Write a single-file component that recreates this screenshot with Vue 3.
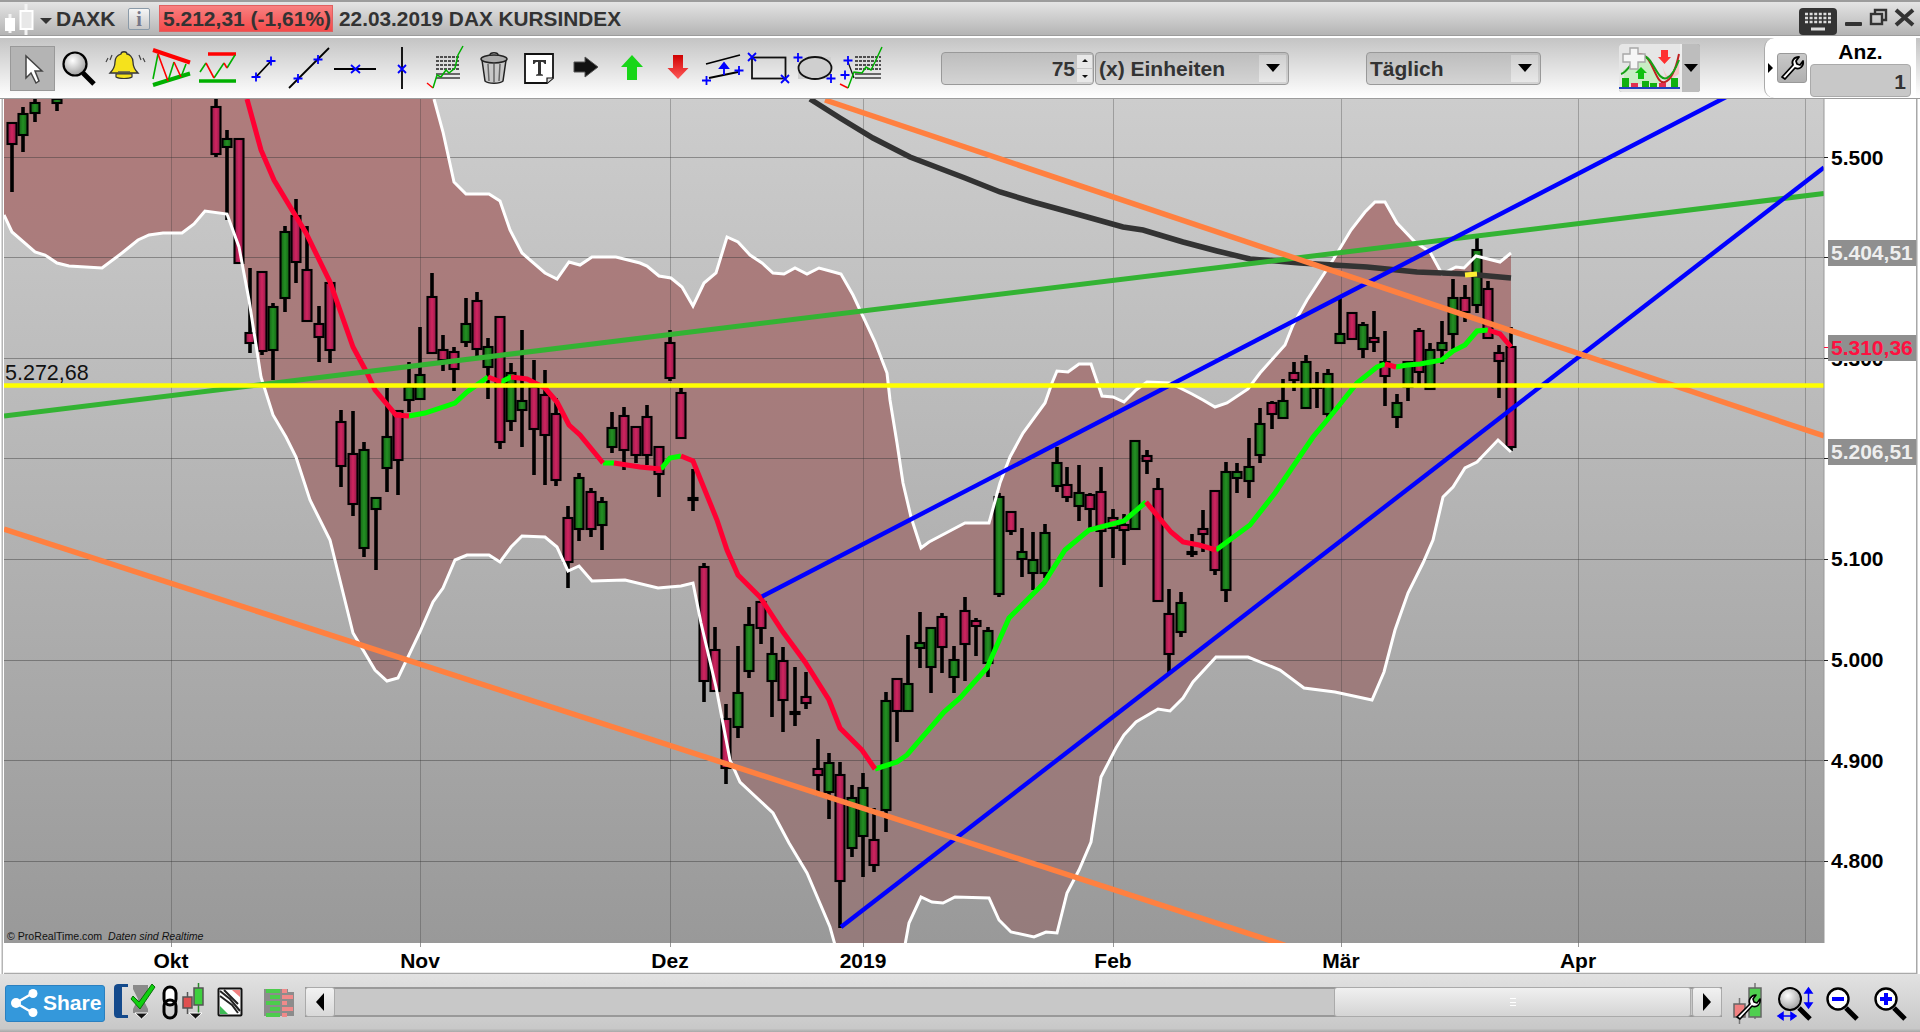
<script setup>
// candles: x, wick top, wick bottom, body top, body bottom, colour
const candles = [
  [12, 122, 192, 123, 144, "r"], [23, 107, 152, 114, 135, "g"], [35, 98, 122, 103, 113, "g"], [57, 98, 111, 99, 103, "g"],
  [216, 98, 157, 107, 154, "r"], [227, 130, 220, 139, 147, "g"], [239, 139, 263, 139, 263, "r"], [250, 268, 353, 333, 343, "r"],
  [262, 272, 355, 272, 351, "r"], [273, 303, 380, 307, 350, "g"], [285, 226, 312, 232, 298, "g"], [296, 199, 283, 216, 262, "r"],
  [307, 226, 322, 270, 321, "r"], [319, 306, 362, 324, 337, "r"], [330, 283, 363, 283, 350, "r"], [341, 410, 487, 422, 466, "r"],
  [353, 411, 516, 454, 504, "r"], [364, 442, 557, 450, 548, "g"], [376, 497, 570, 498, 509, "g"], [387, 388, 492, 437, 468, "g"],
  [398, 410, 495, 411, 460, "r"], [409, 362, 412, 387, 400, "g"], [420, 327, 399, 375, 399, "g"], [432, 273, 353, 297, 353, "r"],
  [443, 335, 371, 350, 360, "r"], [454, 347, 391, 352, 369, "r"], [466, 298, 347, 324, 342, "g"], [477, 292, 356, 301, 349, "r"],
  [488, 338, 399, 347, 367, "g"], [500, 316, 449, 317, 442, "r"], [511, 363, 431, 373, 421, "g"], [522, 330, 447, 401, 410, "g"],
  [534, 360, 475, 387, 429, "r"], [545, 370, 485, 395, 435, "r"], [556, 398, 486, 414, 480, "r"], [568, 506, 588, 518, 562, "r"],
  [579, 473, 541, 478, 529, "g"], [591, 488, 537, 492, 529, "r"], [602, 497, 550, 502, 525, "g"], [612, 412, 453, 428, 447, "g"],
  [624, 407, 470, 416, 450, "r"], [636, 427, 463, 427, 455, "r"], [647, 405, 465, 417, 455, "r"], [659, 447, 497, 447, 474, "r"],
  [670, 330, 381, 343, 378, "r"], [681, 388, 438, 393, 438, "r"], [693, 469, 511, 498, 500, "d"], [704, 563, 702, 567, 681, "r"],
  [715, 627, 691, 650, 691, "r"], [726, 704, 784, 719, 768, "r"], [738, 646, 738, 693, 727, "g"], [749, 607, 678, 625, 671, "g"],
  [761, 602, 644, 602, 628, "r"], [772, 637, 717, 654, 681, "g"], [783, 647, 732, 661, 700, "r"], [795, 667, 726, 712, 714, "d"],
  [806, 672, 709, 697, 703, "r"], [818, 739, 796, 769, 775, "r"], [829, 753, 819, 763, 792, "g"], [840, 762, 928, 775, 881, "r"],
  [852, 785, 857, 798, 848, "g"], [863, 773, 877, 788, 836, "g"], [874, 808, 872, 840, 865, "r"], [886, 692, 832, 701, 810, "g"],
  [897, 679, 742, 679, 711, "r"], [908, 635, 712, 684, 711, "g"], [920, 612, 668, 643, 648, "g"], [931, 627, 693, 628, 667, "g"],
  [942, 613, 673, 617, 647, "r"], [954, 646, 693, 660, 677, "g"], [965, 597, 681, 611, 644, "r"], [976, 618, 656, 621, 626, "r"],
  [988, 627, 677, 631, 663, "g"], [999, 493, 597, 497, 594, "g"], [1011, 511, 535, 512, 531, "r"], [1022, 528, 577, 552, 559, "g"],
  [1033, 532, 590, 560, 573, "g"], [1045, 524, 578, 533, 573, "g"], [1057, 447, 492, 463, 486, "g"], [1067, 467, 502, 485, 497, "r"],
  [1079, 465, 521, 493, 506, "g"], [1090, 493, 528, 495, 509, "r"], [1101, 467, 587, 492, 531, "r"], [1113, 509, 558, 518, 528, "r"],
  [1124, 514, 565, 525, 530, "r"], [1135, 440, 529, 441, 529, "g"], [1147, 450, 474, 456, 461, "r"], [1158, 478, 601, 489, 601, "r"],
  [1169, 589, 673, 614, 654, "r"], [1181, 592, 637, 603, 632, "g"], [1192, 534, 557, 552, 554, "d"], [1203, 510, 552, 529, 534, "r"],
  [1215, 491, 575, 491, 570, "r"], [1226, 462, 602, 472, 590, "g"], [1237, 463, 493, 472, 478, "g"], [1249, 438, 498, 467, 481, "g"],
  [1260, 408, 463, 424, 455, "g"], [1272, 401, 429, 403, 414, "r"], [1283, 379, 418, 401, 418, "g"], [1294, 362, 391, 373, 380, "r"],
  [1306, 355, 408, 362, 408, "g"], [1317, 372, 408, 386, 388, "d"], [1328, 369, 418, 374, 414, "g"], [1340, 297, 343, 334, 343, "g"],
  [1352, 313, 339, 313, 339, "r"], [1363, 322, 358, 325, 349, "g"], [1374, 311, 352, 338, 342, "r"], [1385, 331, 406, 362, 376, "r"],
  [1397, 394, 428, 403, 417, "g"], [1408, 361, 401, 362, 387, "g"], [1419, 328, 386, 331, 372, "r"], [1430, 343, 390, 350, 389, "g"],
  [1442, 321, 364, 343, 350, "g"], [1453, 279, 349, 298, 334, "g"], [1465, 285, 322, 298, 312, "r"], [1477, 234, 313, 250, 305, "g"],
  [1488, 281, 338, 289, 338, "r"], [1499, 345, 398, 353, 361, "r"], [1511, 327, 451, 347, 447, "r"],
];

const upperBand = "434,99 443,132 454,182 466,194 489,194 500,201 510,230 522,253 545,273 557,279 569,262 580,265 592,257 616,257 640,263 647,266 659,276 671,278 682,287 693,306 704,283 716,273 727,237 738,242 750,255 762,263 773,273 784,274 795,268 807,274 819,268 830,271 841,274 853,295 875,342 887,373 890,400 897,443 903,483 911,517 921,548 929,542 965,523 989,523 1000,483 1010,457 1023,433 1045,403 1052,383 1057,371 1068,372 1079,364 1091,364 1102,396 1113,397 1124,402 1136,390 1147,382 1170,383 1192,394 1203,400 1215,407 1227,403 1248,389 1260,373 1285,345 1293,325 1307,300 1333,260 1351,230 1365,212 1375,202 1385,202 1397,223 1415,242 1430,252 1442,274 1456,267 1464,268 1476,256 1500,262 1511,253";
const lowerBand = "4,215 12,232 35,252 45,255 57,263 69,266 102,268 122,253 138,240 149,235 163,233 182,233 194,224 205,211 227,214 239,247 249,300 261,377 273,415 286,437 296,457 310,500 330,540 353,633 375,670 387,681 398,678 420,632 433,602 443,588 455,560 467,555 489,555 500,562 511,547 522,536 545,537 557,547 568,571 579,566 592,581 625,580 658,588 681,586 693,583 701,623 716,687 730,760 740,782 773,813 789,843 807,873 830,927 835,945 870,970 905,945 909,923 921,897 932,902 943,903 955,897 989,898 999,920 1011,932 1034,937 1046,932 1057,933 1067,893 1079,870 1091,842 1101,777 1116,748 1124,735 1136,722 1158,709 1170,711 1183,698 1193,682 1216,657 1248,657 1280,670 1304,688 1335,692 1372,700 1384,672 1395,630 1408,593 1423,563 1433,540 1443,497 1453,487 1465,468 1477,462 1498,440 1511,452";
const bandFill = `4,99 ${upperBand} ${lowerBand.split(" ").reverse().join(" ")}`;
const ma200 = "810,99 840,118 873,138 910,157 965,178 1000,192 1033,202 1073,213 1123,227 1143,230 1183,242 1217,251 1250,259 1300,263 1367,267 1417,272 1467,274 1511,278";

const maRed = [
  "247,99 261,150 274,180 286,200 306,233 330,282 353,347 367,373 375,390 396,415 409,416",
  "488,377 501,382",
  "511,377 527,379 545,388 557,402 569,425 580,435 603,463",
  "614,463 640,467 650,468 661,469",
  "681,456 693,461 717,520 727,550 738,575 760,597 783,632 805,662 829,700 840,728 862,750 875,769",
  "1146,502 1171,532 1183,542 1199,545 1216,550",
  "1385,364 1396,367",
  "1488,330 1500,334 1511,347",
];
const maGreen = [
  "409,416 425,413 455,403 467,392 488,377",
  "501,382 511,377",
  "603,463 614,463",
  "661,469 670,458 681,456",
  "875,769 897,762 907,755 944,712 960,698 987,668 1009,618 1044,583 1065,550 1089,530 1124,521 1146,502",
  "1216,550 1250,525 1275,493 1313,437 1333,413 1357,383 1377,367 1385,364",
  "1396,367 1407,365 1420,364 1442,360 1453,351 1465,345 1477,331 1488,330",
];

const gridY = [157.5, 257.5, 358.5, 458.5, 559.5, 660.5, 760.5, 861.5];
const gridX = [171.5, 420.5, 670.5, 863.5, 1113.5, 1341.5, 1578.5, 1805.5];
const yLabels = [
  ["5.500", 165], ["5.300", 366], ["5.100", 566], ["5.000", 667], ["4.900", 768], ["4.800", 868],
];
const xLabels = [
  ["Okt", 171], ["Nov", 420], ["Dez", 670], ["2019", 863], ["Feb", 1113], ["Mär", 1341], ["Apr", 1578],
];
const priceTags = [
  { text: "5.404,51", y: 240, cls: "tag-text" },
  { text: "5.310,36", y: 335, cls: "tag-text tag-text--red" },
  { text: "5.206,51", y: 439, cls: "tag-text" },
];

const fibRows = [57, 61, 65, 69, 74, 78];
const fib2Rows = [57, 61, 65, 69, 74, 78];
</script>

<template>
  <div class="window">
    <header class="title-bar">
      <svg width="56" height="34" viewBox="0 2 56 34">
        <path d="M10 14v19M26 4v31" stroke="#f4f4f4" stroke-width="3" />
        <rect x="5" y="18" width="10" height="13" fill="#fff" />
        <rect x="20.5" y="11" width="12" height="18" fill="#e8e8e8" stroke="#fff" stroke-width="2" />
        <path d="M40 18h12l-6 6z" fill="#333" />
      </svg>
      <span class="title-bar__name">DAXK</span>
      <span class="title-bar__info">i</span>
      <span class="title-bar__price">5.212,31 (-1,61%)</span>
      <span class="title-bar__desc">22.03.2019 DAX KURSINDEX</span>
      <svg class="title-bar__controls" width="121" height="34" viewBox="1795 2 121 34">
        <rect x="1799" y="8" width="38" height="27" rx="4" fill="#333" />
        <path d="M1805 14h26M1805 18h26M1805 22h26" stroke="#ddd" stroke-width="2.4" stroke-dasharray="3 1.6" />
        <rect x="1811" y="27.500" width="14" height="3" fill="#ddd" />
        <rect x="1845" y="22" width="17" height="4" rx="1" fill="#333" />
        <path d="M1875 14v-4h11v10h-4" fill="none" stroke="#333" stroke-width="2.4" />
        <rect x="1871" y="14" width="11" height="10" fill="none" stroke="#333" stroke-width="2.4" />
        <path d="M1896 10l17 15M1913 10l-17 15" stroke="#333" stroke-width="4" />
      </svg>
    </header>

    <nav class="toolbar">
      <button class="tool-pointer">
        <svg width="45" height="45" viewBox="10 45 45 45">
          <path d="M26 55v22l5-5 5 10 3-2-4-10h7z" fill="#fff" stroke="#444" stroke-width="1.5" />
        </svg>
      </button>
      <svg width="46" height="61" viewBox="58 38 46 61">
        <defs>
          <radialGradient id="lens" cx="40%" cy="35%" r="70%">
            <stop offset="0" stop-color="#fff" />
            <stop offset="1" stop-color="#9a9a9a" />
          </radialGradient>
        </defs>
        <path d="M83 73l11 11" stroke="#000" stroke-width="5" />
        <circle cx="75" cy="64" r="11.500" fill="url(#lens)" stroke="#000" stroke-width="2.200" />
      </svg>
      <svg width="46" height="61" viewBox="104 38 46 61">
        <path d="M110 73h28c-4-4-5-7-5-11 0-5-4-8-6-8 0-3-6-3-6 0-3 1-6 3-6 8 0 4-1 7-5 11z" fill="#f5e21c" stroke="#333" stroke-width="1.300" />
        <path d="M116 74h16v3c-3 2-13 2-16 0z" fill="#f5e21c" stroke="#333" stroke-width="1.200" />
        <path d="M118 72h12" stroke="#555" stroke-width="1.500" />
        <path d="M108 58l-2 4M112 55l-2 5M139 55l2 5M143 58l2 4" stroke="#444" stroke-width="1.200" />
      </svg>
      <svg width="47" height="61" viewBox="150 38 47 61">
        <path d="M153 50l37 12.500" stroke="#ff0000" stroke-width="4" />
        <path d="M153 85l37-11.500" stroke="#00b000" stroke-width="4" />
        <path d="M153 79l5-25M168 81l6-19M181 77l5-13" stroke="#00b000" stroke-width="1.600" fill="none" />
        <path d="M158 54l10 27M174 62l7 15" stroke="#ff0000" stroke-width="1.600" fill="none" />
      </svg>
      <svg width="50" height="61" viewBox="197 38 50 61">
        <path d="M208 54h28" stroke="#ff0000" stroke-width="3.500" />
        <path d="M199 81h37" stroke="#00b000" stroke-width="3.500" />
        <path d="M200 72l6-9M214 78l10-15M227 68l8-13" stroke="#00b000" stroke-width="1.600" fill="none" />
        <path d="M206 63l8 15M224 63l3 5" stroke="#ff0000" stroke-width="1.600" fill="none" />
      </svg>
      <svg width="39" height="61" viewBox="247 38 39 61">
        <path d="M256 77l15-16" stroke="#000" stroke-width="1.800" />
        <path d="M256 72.500v9M251.500 77h9M271 56.500v9M266.500 61h9" stroke="#0000ff" stroke-width="1.800" />
      </svg>
      <svg width="46" height="61" viewBox="286 38 46 61">
        <path d="M289 88l40-40" stroke="#000" stroke-width="1.800" />
        <path d="M298 74v9M293.500 78.500h9M318 55v9M313.500 59.500h9" stroke="#0000ff" stroke-width="1.800" />
      </svg>
      <svg width="60" height="61" viewBox="332 38 60 61">
        <path d="M334 69h42" stroke="#000" stroke-width="1.800" />
        <path d="M351 65l9 8M360 65l-9 8" stroke="#0000ff" stroke-width="1.800" />
      </svg>
      <svg width="30" height="61" viewBox="392 38 30 61">
        <path d="M402 47v42" stroke="#000" stroke-width="1.800" />
        <path d="M398 65l8 8M406 65l-8 8" stroke="#0000ff" stroke-width="1.800" />
      </svg>
      <svg width="54" height="61" viewBox="422 38 54 61">
        <path v-for="y in fibRows" :key="y" :d="`M436 ${y}h24`" stroke="#222" stroke-width="1.300" :stroke-dasharray="y % 2 ? '3 1' : '0'" />
        <path d="M427 83l6 5" stroke="#ff0000" stroke-width="1.400" fill="none" />
        <path d="M433 88l4-13 4 2 5-7 3 3 6-5 3-13 5-9" stroke="#00b000" stroke-width="1.500" fill="none" />
      </svg>
      <svg width="44" height="61" viewBox="476 38 44 61">
        <path d="M482 60l3 21c3 3 15 3 18 0l3-21z" fill="#c8c8c8" stroke="#222" stroke-width="1.500" />
        <ellipse cx="494" cy="59" rx="13" ry="4" fill="#aaa" stroke="#222" stroke-width="1.500" />
        <path d="M490 55c0-3 8-3 8 0" fill="none" stroke="#222" stroke-width="1.500" />
        <path d="M488 64l1 17M494 64v18M500 64l-1 17" stroke="#666" stroke-width="1.500" />
      </svg>
      <svg width="50" height="61" viewBox="520 38 50 61">
        <path d="M525 54h28v24l-6 5h-22z" fill="#fff" stroke="#111" stroke-width="1.800" />
        <path d="M547 83v-5h6" fill="#ddd" stroke="#111" stroke-width="1.200" />
        <path d="M533 60h13v4h-1.500c-.5-1.500-1-2-3.500-2v12l2 .8v1h-7v-1l2-.8v-12c-2.500 0-3 .5-3.500 2H533z" fill="#333" />
      </svg>
      <svg width="46" height="61" viewBox="570 38 46 61">
        <path d="M574 62h11v-5l13 10-13 10v-5h-11z" fill="#111" stroke="#555" stroke-width="1" />
      </svg>
      <svg width="48" height="61" viewBox="616 38 48 61">
        <path d="M632 55l11 12h-6v13h-10v-13h-6z" fill="#19d619" />
      </svg>
      <svg width="36" height="61" viewBox="664 38 36 61">
        <defs>
          <linearGradient id="redArrow" x1="0" x2="0" y1="0" y2="1">
            <stop offset="0" stop-color="#d00000" />
            <stop offset="1" stop-color="#ff5a5a" />
          </linearGradient>
        </defs>
        <path d="M673 55h10v13h5.500l-10.500 11-10.500-11h5.500z" fill="url(#redArrow)" />
      </svg>
      <svg width="45" height="61" viewBox="700 38 45 61">
        <path d="M706 64l34-9M709 78l29-6" stroke="#000" stroke-width="1.800" />
        <path d="M724 75v-8M720 68l4-5 4 5z" stroke="#0000ff" stroke-width="1.800" fill="#0000ff" />
        <path d="M706.500 76v9M702 80.500h9M739 66v9M734.500 70.500h9" stroke="#0000ff" stroke-width="1.800" />
      </svg>
      <svg width="47" height="61" viewBox="745 38 47 61">
        <rect x="752" y="57.500" width="33.500" height="21" fill="none" stroke="#111" stroke-width="1.800" />
        <path d="M748 53l8 8M756 53l-8 8M781 75l8 8M789 75l-8 8" stroke="#0000ff" stroke-width="1.800" />
      </svg>
      <svg width="46" height="61" viewBox="792 38 46 61">
        <rect x="798" y="57" width="33" height="22" fill="#cfcfcf" />
        <ellipse cx="815" cy="68" rx="16.500" ry="11" fill="none" stroke="#111" stroke-width="1.800" />
        <path d="M798 53v9M793.500 57.500h9M831 74v9M826.500 78.500h9" stroke="#0000ff" stroke-width="1.800" />
      </svg>
      <svg width="46" height="61" viewBox="838 38 46 61">
        <path v-for="y in fib2Rows" :key="y" :d="`M855 ${y}h26`" stroke="#222" stroke-width="1.300" :stroke-dasharray="y % 2 ? '3 1' : '0'" />
        <path d="M848 62l6 16" stroke="#111" stroke-width="1.300" fill="none" />
        <path d="M840 84l8 4" stroke="#ff0000" stroke-width="1.400" fill="none" />
        <path d="M848 88l6-16 8 1 4-6 5 3 4-8 7-15" stroke="#00b000" stroke-width="1.500" fill="none" />
        <path d="M848 56v9M843.500 60.500h9M845 70.500v9M840.500 75h9" stroke="#0000ff" stroke-width="1.800" />
      </svg>

      <div class="field field--number">
        75
        <span class="spinner"><i class="spinner__up"></i><i class="spinner__down"></i></span>
      </div>
      <div class="field field--units">(x) Einheiten<span class="drop"><i></i></span></div>
      <div class="field field--period">Täglich<span class="drop"><i></i></span></div>

      <div class="indicator">
        <svg width="61" height="48" viewBox="1620 44 61 48">
          <rect x="1620" y="44" width="61" height="48" fill="#e6e6e6" />
          <path d="M1662 62c4 14 8 18 12 10 3-5 5-12 6-18v20l-12 8z" fill="#f6c4c4" />
          <path d="M1624 70c8-4 12-14 20-14 10 0 12 20 20 20l-4 8h-34z" fill="#c9edc4" />
          <path d="M1632 58c10-8 16-2 20 6 6 12 8 20 14 18s11-14 14-28" fill="none" stroke="#c02020" stroke-width="2" />
          <path d="M1622 74c8-2 12-18 22-18 10 0 14 26 24 22 6-3 9-10 12-18" fill="none" stroke="#16a016" stroke-width="2" />
          <path d="M1631 48h8v6h7v8h-7v7h-8v-7h-7v-8h7z" fill="#f6f6f6" stroke="#a8a8a8" stroke-width="1.400" />
          <path d="M1662 50h7v7h3l-6.500 7-6.500-7h3z" fill="#ff3030" />
          <path d="M1642 67l6 6h-3v6h-6v-6h-3z" fill="#10c010" />
          <path d="M1623 78h7v9h-7zM1643 81h7v6h-7zM1651 83h7v4h-7zM1672 78h7v9h-7z" fill="#10b010" />
          <path d="M1632 83h7v4h-7zM1660 83h7v4h-7z" fill="#e03050" />
          <path d="M1620 88h61" stroke="#2040c0" stroke-width="2" />
        </svg>
        <span class="indicator__drop"><i></i></span>
      </div>

      <div class="tool-panel">
        <i class="tool-panel__arrow"></i>
        <button class="wrench-btn">
          <svg width="26" height="26" viewBox="0 0 26 26">
            <path d="M3 22l11-12c-2-4 1-8 6-8l-3 4 1 3 3 1 3-4c1 5-3 9-8 7L6 24z" fill="#fff" stroke="#000" stroke-width="1.800" stroke-linejoin="round" />
          </svg>
        </button>
        <div class="count">
          <span class="count__label">Anz.</span>
          <span class="count__value">1</span>
        </div>
      </div>
    </nav>

    <svg class="chart" width="1920" height="875" viewBox="0 99 1920 875">
      <defs>
        <linearGradient id="plotBg" gradientUnits="userSpaceOnUse" x1="0" x2="0" y1="99" y2="943">
          <stop offset="0" stop-color="#cdcdcd" />
          <stop offset="1" stop-color="#999999" />
        </linearGradient>
        <linearGradient id="bandBg" gradientUnits="userSpaceOnUse" x1="0" x2="0" y1="99" y2="943">
          <stop offset="0" stop-color="#af7c7c" />
          <stop offset="1" stop-color="#957c7c" />
        </linearGradient>
        <linearGradient id="bodyRed" x1="0" x2="1" y1="0" y2="0">
          <stop offset="0" stop-color="#8c1a48" />
          <stop offset=".5" stop-color="#d0245f" />
          <stop offset="1" stop-color="#8c1a48" />
        </linearGradient>
        <linearGradient id="bodyGreen" x1="0" x2="1" y1="0" y2="0">
          <stop offset="0" stop-color="#145f14" />
          <stop offset=".5" stop-color="#239023" />
          <stop offset="1" stop-color="#145f14" />
        </linearGradient>
        <clipPath id="plotClip">
          <rect x="4" y="99" width="1820" height="844" />
        </clipPath>
      </defs>

      <rect x="0" y="99" width="1920" height="875" fill="#fff" />
      <rect x="1.500" y="99" width="1.500" height="875" fill="#b5b5b5" />
      <rect x="1916" y="99" width="1.500" height="875" fill="#a8a8a8" />
      <rect x="4" y="99" width="1820" height="844" fill="url(#plotBg)" />

      <g clip-path="url(#plotClip)">
        <polygon :points="bandFill" fill="url(#bandBg)" />
        <path v-for="y in gridY" :key="y" :d="`M4 ${y}H1824`" class="grid" />
        <path v-for="x in gridX" :key="x" :d="`M${x} 99V943`" class="grid grid--v" />

        <g v-for="c in candles" :key="c[0]">
          <path :d="`M${c[0]} ${c[1]}V${c[2]}`" stroke="#000" stroke-width="3.600" />
          <rect
            :x="c[0] - 4.500"
            :y="c[3]"
            width="9"
            :height="c[4] - c[3]"
            :fill="c[5] === 'r' ? 'url(#bodyRed)' : c[5] === 'g' ? 'url(#bodyGreen)' : '#000'"
            stroke="#000"
            stroke-width="2.100"
          />
        </g>

        <polyline :points="upperBand" class="band-line" />
        <polyline :points="lowerBand" class="band-line" />
        <polyline :points="ma200" class="ma-black" />
        <path d="M1465 275l12-1" stroke="#ffee33" stroke-width="5" />
        <polyline v-for="p in maGreen" :key="p" :points="p" class="ma ma--green" />
        <polyline v-for="p in maRed" :key="p" :points="p" class="ma ma--red" />

        <path d="M4 416L1824 193.500" class="trend trend--green" />
        <path d="M762 596.500L1730 95" class="trend trend--blue" />
        <path d="M841 927L1824 167.500" class="trend trend--blue" />
        <path d="M4 529L1290 947" class="trend trend--orange" />
        <path d="M825 100L1824 436" class="trend trend--orange" />
        <path d="M4 385.500H1824" class="trend trend--yellow" />

        <text x="5" y="380" class="level-text">5.272,68</text>
        <text x="7" y="940" class="copy-text">© ProRealTime.com <tspan dx="3" font-style="italic">Daten sind Realtime</tspan></text>
      </g>

      <path v-for="x in gridX.slice(0, 7)" :key="'t' + x" :d="`M${x} 943V947`" stroke="#999" />
      <path d="M1824 99V943" stroke="#999" />
      <path d="M4 973.500H1916" stroke="#aaa" stroke-width="1.500" />
      <path v-for="y in gridY" :key="'a' + y" :d="`M1824 ${y}H1828`" stroke="#222" />

      <text v-for="l in yLabels" :key="l[0]" x="1831" :y="l[1]" class="axis-text">{{ l[0] }}</text>
      <g v-for="t in priceTags" :key="t.text">
        <rect x="1828" :y="t.y" width="88" height="26" fill="#8f8f8f" />
        <text x="1831" :y="t.y + 20" :class="t.cls">{{ t.text }}</text>
      </g>
      <path d="M1824 347.500H1828" stroke="#ff1040" />
      <text v-for="l in xLabels" :key="l[0]" :x="l[1]" y="968" text-anchor="middle" class="axis-text">{{ l[0] }}</text>
    </svg>

    <footer class="bottom-bar">
      <button class="share">
        <svg width="30" height="30" viewBox="0 0 30 30">
          <path d="M7 15L24 5M7 15l17 10" stroke="#fff" stroke-width="2.500" />
          <circle cx="7" cy="15" r="5" fill="#fff" />
          <circle cx="24" cy="5.500" r="4.500" fill="#fff" />
          <circle cx="24" cy="24.500" r="4.500" fill="#fff" />
        </svg>
        Share
      </button>
      <svg width="50" height="58" viewBox="110 974 50 58">
        <path d="M128 984h-10c-2 0-4 1-4 4v26c0 3 2 4 4 4h10v-3h-6v-28h6z" fill="#144a8c" />
        <path d="M133 985h15v4l-5 10 5 10v4h-15v-4l5-10-5-10z" fill="#8a8a8a" />
        <path d="M133 996l6 6 13-18 3 3-15 22-9-10z" fill="#10d010" stroke="#087008" stroke-width="1" />
        <path d="M135 1013h13l-6.500 6z" fill="#111" stroke="#fff" stroke-width="1" />
      </svg>
      <svg width="52" height="58" viewBox="160 974 52 58">
        <rect x="164" y="987" width="12" height="18" rx="6" fill="#fff" stroke="#000" stroke-width="3" />
        <rect x="164" y="1000" width="12" height="18" rx="6" fill="none" stroke="#000" stroke-width="3" />
        <path d="M187.500 992v22" stroke="#555" stroke-width="1.500" />
        <rect x="183" y="997" width="9" height="11" fill="#e05050" stroke="#555" stroke-width="1.500" />
        <path d="M198.500 983v30" stroke="#2a8a2a" stroke-width="1.500" />
        <rect x="194" y="988" width="9" height="17" fill="#3dd03d" stroke="#555" stroke-width="1.500" />
        <path d="M189 1013h13l-6.500 6z" fill="#111" stroke="#fff" stroke-width="1" />
      </svg>
      <svg width="46" height="58" viewBox="212 974 46 58">
        <rect x="218.500" y="988.500" width="23" height="27" rx="1" fill="#fff" stroke="#111" stroke-width="2" />
        <path d="M220 991l10 8 10 12M220 996l12 9 6 8M224 990l14 14" stroke="#222" stroke-width="2" fill="none" />
        <path d="M232 990h8v7z" fill="#f08080" />
        <path d="M220 1014v-8l8 8z" fill="#3dbb55" />
      </svg>
      <svg width="47" height="58" viewBox="258 974 47 58">
        <path d="M264 989h24v3h6v24h-30z" fill="#8c8c8c" />
        <g fill="#4ccc4c">
          <rect x="266" y="989" width="14" height="4" /><rect x="270" y="995" width="10" height="4" />
          <rect x="266" y="1001" width="14" height="4" /><rect x="270" y="1007" width="10" height="4" />
          <rect x="266" y="1013" width="14" height="4" />
        </g>
        <g fill="#f08a8a">
          <rect x="282" y="989" width="5" height="4" /><rect x="282" y="995" width="11" height="4" />
          <rect x="282" y="1001" width="5" height="4" /><rect x="282" y="1007" width="11" height="4" />
          <rect x="282" y="1013" width="5" height="4" />
        </g>
      </svg>

      <div class="scroll">
        <span class="scroll__btn"><i class="scroll__left"></i></span>
        <div class="scroll__track">
          <div class="scroll__thumb"><i></i></div>
        </div>
        <span class="scroll__btn"><i class="scroll__right"></i></span>
      </div>

      <svg class="bottom-bar__tools" width="188" height="58" viewBox="1728 974 188 58">
        <path d="M1739.500 998v26M1755 983v36" stroke="#777" stroke-width="1.500" />
        <rect x="1734" y="1004" width="11" height="13" fill="#f08080" stroke="#666" stroke-width="1.500" />
        <rect x="1749" y="988" width="12" height="29" fill="#4fcf4f" stroke="#666" stroke-width="1.500" />
        <path d="M1737 1017l13-13c-2-4 1-9 6-9l-3 4 1 3 3 1 3-4c1 5-3 9-8 7l-12 13z" fill="#fff" stroke="#000" stroke-width="1.600" stroke-linejoin="round" />

        <path d="M1799 1008l11 11" stroke="#000" stroke-width="5" />
        <circle cx="1790" cy="999" r="11" fill="url(#lens)" stroke="#000" stroke-width="2" />
        <path d="M1808.500 991v14M1805 993l3.500-5 3.500 5zM1805 1003l3.500 5 3.500-5zM1781 1016h12M1783 1012.500l-5 3.500 5 3.500zM1791 1012.500l5 3.500-5 3.500z" stroke="#0000ff" stroke-width="1.500" fill="#0000ff" />

        <path d="M1846 1008l11 11" stroke="#000" stroke-width="5" />
        <circle cx="1838" cy="999" r="10.500" fill="#fff" stroke="#000" stroke-width="2.400" />
        <path d="M1832 999h12" stroke="#0000ff" stroke-width="4" />

        <path d="M1894 1008l11 11" stroke="#000" stroke-width="5" />
        <circle cx="1886" cy="999" r="10.500" fill="#fff" stroke="#000" stroke-width="2.400" />
        <path d="M1880 999h12M1886 993v12" stroke="#0000ff" stroke-width="4" />
      </svg>
    </footer>
  </div>
</template>

<style scoped>
.window {
  width: 1920px;
  height: 1032px;
  overflow: hidden;
  display: flex;
  flex-direction: column;
  font-family: "Liberation Sans", Arial, sans-serif;
  color: #333;
  background: #fff;
}

.title-bar {
  height: 36px;
  box-sizing: border-box;
  flex: none;
  display: flex;
  align-items: center;
  border-top: 2px solid #9c9c9c;
  border-bottom: 1px solid #9c9c9c;
  background: linear-gradient(#e4e4e4, #b4b4b4);
  font-size: 21px;
  font-weight: bold;
  white-space: nowrap;
}

.title-bar__name {
  width: 72px;
}

.title-bar__info {
  width: 22px;
  height: 22px;
  box-sizing: border-box;
  border: 1px solid #8a9aa8;
  border-radius: 2px;
  background: linear-gradient(#f6f6f6, #c8c8c8);
  font-family: "Liberation Serif", serif;
  font-size: 20px;
  line-height: 20px;
  text-align: center;
  color: #778;
}

.title-bar__price {
  margin-left: 9px;
  width: 174px;
  height: 27px;
  box-sizing: border-box;
  padding-left: 3px;
  background: linear-gradient(#f88080, #f44a4a);
  border: 1px solid #e06060;
  line-height: 25px;
}

.title-bar__desc {
  margin-left: 6px;
  font-size: 20.8px;
}

.title-bar__controls {
  margin-left: auto;
  margin-right: 4px;
}

.toolbar {
  height: 62px;
  margin-top: 1px;
  box-sizing: border-box;
  flex: none;
  display: flex;
  align-items: center;
  padding-left: 10px;
  border-top: 1px solid #fff;
  border-bottom: 1px solid #9c9c9c;
  background: linear-gradient(#c4c4c4, #ffffff);
}

.tool-pointer {
  width: 45px;
  height: 45px;
  margin-right: 3px;
  padding: 0;
  box-sizing: border-box;
  background: #b4b4b4;
  border: 1px solid #999;
  display: flex;
}

.tool-pointer svg {
  margin: -1px;
}

.field {
  height: 33px;
  box-sizing: border-box;
  position: relative;
  display: flex;
  align-items: center;
  border: 1px solid #999;
  border-radius: 4px;
  background: linear-gradient(#bdbdbd, #d4d4d4);
  font-size: 21px;
  font-weight: bold;
  line-height: 1;
}

.field--number {
  width: 153px;
  margin-left: 57px;
  justify-content: flex-end;
  padding-right: 18px;
}

.field--units {
  width: 194px;
  margin-left: 1px;
  padding-left: 3px;
}

.field--period {
  width: 175px;
  margin-left: 77px;
  padding-left: 3px;
}

.spinner {
  position: absolute;
  right: 1px;
  top: 2px;
  width: 15px;
  display: flex;
  flex-direction: column;
  gap: 1px;
}

.spinner i {
  height: 13px;
  background: #e8e8e8;
  position: relative;
}

.spinner__up::after,
.spinner__down::after {
  content: "";
  position: absolute;
  left: 5px;
  top: 5px;
  border: 3px solid transparent;
}

.spinner__up::after {
  top: 1px;
  border-bottom-color: #111;
}

.spinner__down::after {
  top: 6px;
  border-top-color: #111;
}

.drop {
  position: absolute;
  right: 2px;
  top: 2px;
  bottom: 2px;
  width: 27px;
  background: linear-gradient(#cfcfcf, #e8e8e8);
  display: flex;
  align-items: center;
  justify-content: center;
}

.drop i,
.indicator__drop i {
  border: 7px solid transparent;
  border-top: 8px solid #000;
  border-bottom: 0;
}

.indicator {
  width: 81px;
  height: 48px;
  margin-left: 78px;
  box-sizing: border-box;
  display: flex;
  overflow: hidden;
  border-radius: 3px;
  box-shadow: inset 0 0 0 1px #999;
}

.indicator__drop {
  flex: 1;
  border-left: 2px solid #eee;
  background: #bdbdbd;
  display: flex;
  align-items: center;
  justify-content: center;
}

.tool-panel {
  width: 152px;
  height: 60px;
  margin-left: 64px;
  box-sizing: border-box;
  display: flex;
  align-items: center;
  background: #fff;
  border-left: 1px solid #aaa;
  border-radius: 10px 0 0 10px;
  position: relative;
}

.tool-panel__arrow {
  margin-left: 3px;
  border: 5px solid transparent;
  border-left: 5px solid #000;
  border-right: 0;
}

.wrench-btn {
  width: 30px;
  height: 30px;
  margin-left: 4px;
  padding: 1px;
  box-sizing: border-box;
  display: flex;
  background: linear-gradient(#c8c8c8, #b0b0b0);
  border: 1px solid #999;
  border-radius: 3px;
}

.count {
  width: 101px;
  margin-left: 3px;
  display: flex;
  flex-direction: column;
  align-items: center;
}

.count__label {
  font-size: 21px;
  font-weight: bold;
  color: #000;
  line-height: 25px;
}

.count__value {
  width: 100%;
  height: 33px;
  box-sizing: border-box;
  padding-right: 4px;
  text-align: right;
  font-size: 21px;
  font-weight: bold;
  line-height: 33px;
  border: 1px solid #aaa;
  border-radius: 4px;
  background: #c8c8c8;
}

.chart {
  display: block;
  flex: none;
}

.grid {
  stroke: rgba(50, 50, 50, 0.42);
  stroke-width: 1;
  fill: none;
}

.grid--v {
  stroke: rgba(50, 50, 50, 0.3);
}

.band-line {
  fill: none;
  stroke: #fff;
  stroke-width: 3;
}

.ma-black {
  fill: none;
  stroke: #333;
  stroke-width: 5.500;
}

.ma {
  fill: none;
  stroke-width: 5;
}

.ma--green {
  stroke: #00ff00;
}

.ma--red {
  stroke: #ff0033;
}

.trend {
  fill: none;
}

.trend--green {
  stroke: #33b333;
  stroke-width: 5;
}

.trend--blue {
  stroke: #0000ff;
  stroke-width: 4.400;
}

.trend--orange {
  stroke: #ff8040;
  stroke-width: 5.500;
}

.trend--yellow {
  stroke: #ffff00;
  stroke-width: 4.500;
}

.level-text {
  font-size: 21.5px;
  fill: #111;
  -webkit-text-stroke: 0.6px #111;
}

.copy-text {
  font-size: 10.6px;
  fill: #111;
}

.axis-text {
  font-size: 21px;
  font-weight: bold;
  fill: #000;
}

.tag-text {
  font-size: 21px;
  font-weight: bold;
  fill: #eeeeee;
}

.tag-text--red {
  fill: #ff1040;
}

.bottom-bar {
  height: 58px;
  flex: none;
  display: flex;
  align-items: center;
  padding-left: 5px;
  background: linear-gradient(#e2e2e2 0, #c8c8c8 94%, #a8a8a8 100%);
}

.share {
  width: 100px;
  height: 37px;
  padding: 0 0 0 3px;
  box-sizing: border-box;
  display: flex;
  align-items: center;
  gap: 4px;
  border: 1px solid #2a80c0;
  border-radius: 3px;
  background: #3498db;
  color: #fff;
  font-family: inherit;
  font-size: 21px;
  font-weight: bold;
}

.bottom-bar svg {
  flex: none;
}

.share + svg {
  margin-left: 5px;
}

.scroll {
  width: 1417px;
  height: 30px;
  margin-top: -2px;
  box-sizing: border-box;
  display: flex;
  background: #c8c8c8;
  border-top: 2px solid #999;
  border-bottom: 2px solid #999;
}

.scroll__btn {
  width: 30px;
  margin: -2px 0;
  flex: none;
  box-sizing: border-box;
  border: 1px solid #aaa;
  border-radius: 3px;
  background: linear-gradient(#f2f2f2, #d8d8d8);
  display: flex;
  align-items: center;
  justify-content: center;
}

.scroll__left {
  border: 9px solid transparent;
  border-right: 8px solid #000;
  border-left: 0;
}

.scroll__right {
  border: 9px solid transparent;
  border-left: 8px solid #000;
  border-right: 0;
}

.scroll__track {
  flex: 1;
  display: flex;
  justify-content: flex-end;
}

.scroll__thumb {
  width: 357px;
  margin: -2px 1px -2px 0;
  box-sizing: border-box;
  border: 1px solid #aaa;
  border-radius: 3px;
  background: linear-gradient(#f0f0f0, #d4d4d4);
  display: flex;
  align-items: center;
  justify-content: center;
}

.scroll__thumb i {
  width: 6px;
  height: 6px;
  border-top: 1px solid #fff;
  border-bottom: 1px solid #fff;
  background: linear-gradient(#fff, #fff) center/100% 1px no-repeat;
}

.bottom-bar__tools {
  margin-left: 6px;
}
</style>

<style>
html,
body {
  margin: 0;
  overflow: hidden;
}
</style>
